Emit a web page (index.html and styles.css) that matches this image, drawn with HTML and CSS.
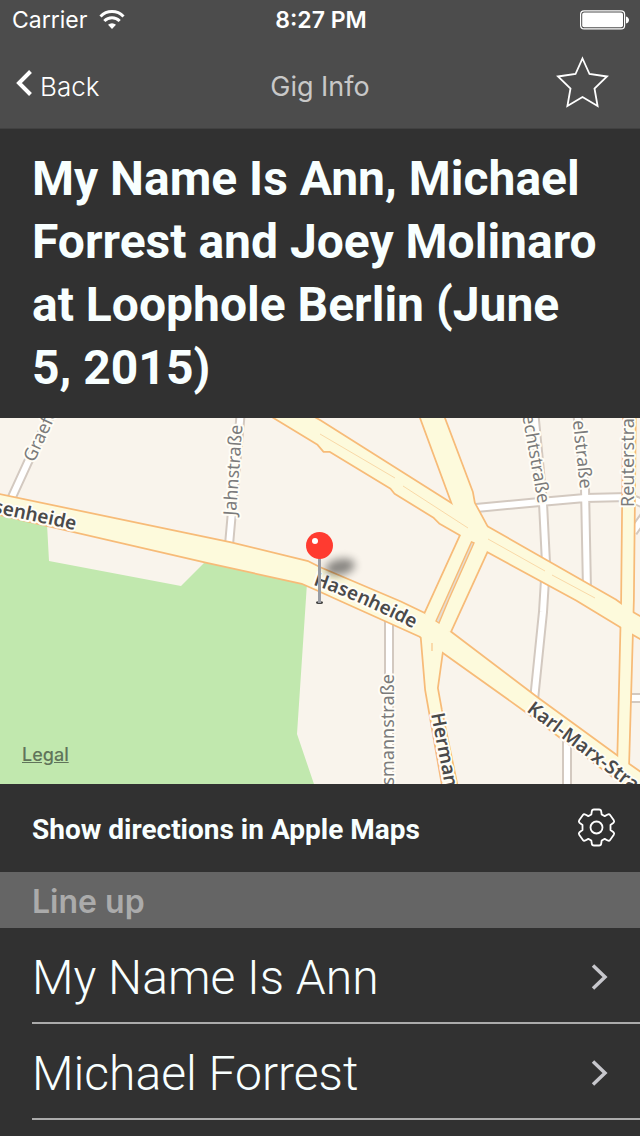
FILE: index.html
```html
<!DOCTYPE html>
<html lang="en">
<head>
<meta charset="utf-8">
<meta name="viewport" content="width=device-width, initial-scale=1">
<title>Gig Info</title>
<link rel="stylesheet" href="styles.css">
</head>
<body>
<header class="top">
  <div class="status">
    <div class="carrier">
      <span>Carrier</span>
      <svg class="wifi" width="26" height="20" viewBox="0 0 26 20" aria-hidden="true">
        <path d="M1.500 6.500a16 16 0 0 1 23 0" fill="none" stroke="#fff" stroke-width="3"/>
        <path d="M5.300 11a11 11 0 0 1 15.400 0" fill="none" stroke="#fff" stroke-width="3"/>
        <path d="M13 19l-4-4.300a6 6 0 0 1 8 0z" fill="#fff"/>
      </svg>
    </div>
    <time class="clock">8:27 PM</time>
    <svg class="battery" width="50" height="20" viewBox="0 0 50 20" aria-label="Battery full">
      <rect x=".6" y=".9" width="44" height="18" rx="3.500" fill="none" stroke="#fff" stroke-width="1.200"/>
      <rect x="2.200" y="2.500" width="40.800" height="14.800" rx="2" fill="#fff"/>
      <path d="M46 6.500c4 1 4 6 0 7z" fill="#fff"/>
    </svg>
  </div>
  <nav class="nav">
    <button class="back" type="button">
      <svg width="17" height="28" viewBox="0 0 17 28" aria-hidden="true"><path d="M15.500 2.500L4 14l11.500 11.500" fill="none" stroke="#fff" stroke-width="4"/></svg>
      <span>Back</span>
    </button>
    <h1 class="nav-title">Gig Info</h1>
    <button class="star" type="button" aria-label="Favourite">
      <svg width="54" height="54" viewBox="0 0 54 54" aria-hidden="true"><path d="M27.500 3.500l7 15.500 17.500 2.500-12.500 12 3.100 17.500-15.100-9-15.100 9 3.100-17.500-12.500-12 17.500-2.500z" fill="none" stroke="#fff" stroke-width="1.800"/></svg>
    </button>
  </nav>
</header>

<main>
  <h2 class="gig-title">My Name Is Ann, Michael Forrest and Joey Molinaro at Loophole Berlin (June 5, 2015)</h2>

  <section class="map" aria-label="Map">
    <svg class="map-art" viewBox="0 418 640 366" preserveAspectRatio="xMidYMid slice">
      <defs>
        <filter id="soft" x="-50%" y="-80%" width="200%" height="260%"><feGaussianBlur stdDeviation="4.500"/></filter>
        <g id="minor" fill="none">
          <path d="M12 497L28 462 53 410M229 545L241 410M476 508L540 502 585 498 628 497 642 503M534 410L543 503 546 563 543 612 534 700M577 410L585 488 587 590M389 615V790M567 740V790M630 698H645M633 532L645 515"/>
        </g>
        <g id="major">
          <path d="M-5 494L230 543 308 562 320 568 400 602 425 614 450 632 537 698 618 757 645 776V800L622 783 527 712 443 652 420 636 340 600 318 590 302 583 207 562-5 513z"/>
          <path d="M300 410L320 421 453 505 487 527 615 600 633 613 645 620V641L633 634 577 600 487 551 461 535 440 523 434 517 395 493 391 488 330 451 324 451 318 444 262 410z"/>
          <path d="M418 410L453 505 461 535 487 527 474 503 472 492 441 410z"/>
          <path d="M461 535L425 614 432 625 450 632 487 551 480 530z"/>
          <path d="M421 630L426 690 444 792H458L441 710 437 688 443 645z"/>
          <path d="M624 410L622 600 618 765 628 772 633 600 635 410z"/>
        </g>
      </defs>
      <rect y="400" width="640" height="400" fill="#f9f4ec"/>
      <path d="M-5 510L47 524 49 561 181 586 207 560 307 583 297 734 316 790H-5z" fill="#c1e8ae"/>
      <use href="#minor" stroke="#d3c9c0" stroke-width="10"/>
      <use href="#minor" stroke="#fff" stroke-width="6"/>
      <use href="#major" fill="#f7bb78" stroke="#f7bb78" stroke-width="3.500" stroke-linejoin="round"/>
      <use href="#major" fill="#fdfadc"/>
      <path d="M320 434L395 478M403 486L468 528M488 539L545 571M552 575L595 598" fill="none" stroke="#f9d9a8"/>
      <path d="M471.500 542l2.500 1-25 56-10 24-3-2 10-22z" fill="#e5dcd2" stroke="#f7bb78" stroke-width="1.400"/>
      <path d="M432 643v8" stroke="#f7bb78"/>
      <path id="curve" d="M313 585Q356 599 420 632" fill="none"/>
      <g class="street">
        <text transform="translate(34 463) rotate(-65)">Graefe</text>
        <text transform="translate(236 516) rotate(-86)">Jahnstraße</text>
        <text transform="translate(538 504) rotate(80)" text-anchor="end">echtstraße</text>
        <text transform="translate(580 489) rotate(84)" text-anchor="end">elstraße</text>
        <text transform="translate(634 507) rotate(-90)">Reuterstra</text>
        <text transform="translate(394 674) rotate(-90)" text-anchor="end">smannstraße</text>
      </g>
      <g class="avenue">
        <text transform="translate(75 530) rotate(12)" text-anchor="end">senheide</text>
        <text><textPath href="#curve">Hasenheide</textPath></text>
        <text transform="translate(526 711) rotate(37)">Karl-Marx-Stra</text>
        <text transform="translate(431 714) rotate(79)">Herman</text>
      </g>
      <ellipse cx="340" cy="567" rx="15" ry="8" fill="#000" opacity=".45" filter="url(#soft)" transform="rotate(-12 340 567)"/>
      <ellipse cx="319.500" cy="602.500" rx="3.500" ry="1.500" fill="#444"/>
      <rect x="318" y="556" width="3" height="47" fill="#9a9ca3"/>
      <circle cx="319.500" cy="545.500" r="13.500" fill="#ff3b30"/>
      <circle cx="315" cy="541" r="3" fill="#fff"/>
    </svg>
    <a class="legal" href="#">Legal</a>
  </section>

  <div class="directions">
    <button class="directions-link" type="button">Show directions in Apple Maps</button>
    <button class="gear" type="button" aria-label="Map settings">
      <svg width="40" height="40" viewBox="0 0 40 40" fill="none" stroke="#fff" stroke-width="1.800" stroke-linejoin="round" aria-hidden="true">
        <circle cx="20.500" cy="19.500" r="6"/>
        <path d="M18 1.500h5q2 0 2.200 1.800l.5 3.200 3 1.600 3-1.600q1.500-.7 2.400.6l3.700 5.200q.9 1.500-.3 2.500L34.500 17v5l3 2.200q1.200 1 .3 2.500l-3.700 5.200q-.9 1.300-2.400.6l-3-1.600-3 1.600-.5 3.200Q25 37.500 23 37.500h-5q-2 0-2.200-1.800l-.5-3.200-3-1.600-3 1.600q-1.500.7-2.400-.6l-3.700-5.200q-.9-1.500.3-2.500L6.500 22v-5l-3-2.200q-1.200-1-.3-2.500l3.700-5.200q.9-1.300 2.400-.6l3 1.600 3-1.600.5-3.200Q16 1.500 18 1.500z"/>
      </svg>
    </button>
  </div>

  <h3 class="section">Line up</h3>
  <ul class="acts">
    <li><a class="act" href="#"><span>My Name Is Ann</span>
      <svg width="18" height="28" viewBox="0 0 18 28" aria-hidden="true"><path d="M3 2.500L15 14 3 25.500" fill="none" stroke="#c7c7cc" stroke-width="3.500"/></svg></a></li>
    <li><a class="act" href="#"><span>Michael Forrest</span>
      <svg width="18" height="28" viewBox="0 0 18 28" aria-hidden="true"><path d="M3 2.500L15 14 3 25.500" fill="none" stroke="#c7c7cc" stroke-width="3.500"/></svg></a></li>
  </ul>
</main>
</body>
</html>
```
FILE: styles.css
```css
* { box-sizing: border-box; }

body {
  margin: 0;
  background: #313131;
  color: #f8ffff;
  font-family: Roboto, sans-serif;
}

button {
  padding: 0;
  border: 0;
  background: none;
  color: inherit;
  font: inherit;
  cursor: pointer;
}

svg { display: block; }

.top {
  background: #4c4c4c;
  border-bottom: 1px solid #414141;
  color: #fff;
  font-family: Inter, sans-serif;
}

.status {
  display: grid;
  grid-template-columns: 1fr auto 1fr;
  align-items: center;
  height: 40px;
  padding: 0 10px 0 12px;
  font-size: 23px;
}

.carrier {
  display: flex;
  align-items: center;
  gap: 12px;
}

.clock { font-weight: 600; }

.battery { justify-self: end; }

.nav {
  display: grid;
  grid-template-columns: 1fr auto 1fr;
  align-items: center;
  height: 88px;
  padding: 0 31px 4px;
}

.back {
  display: flex;
  align-items: center;
  justify-self: start;
  gap: 8px;
  margin-left: -16px;
  padding-top: 8px;
  font-size: 26px;
  font-weight: 300;
}

.back svg { margin-bottom: 6px; }

.nav-title {
  margin: 0;
  padding-top: 8px;
  color: #c8c8c8;
  font-size: 27px;
  font-weight: 400;
}

.star { justify-self: end; }

.gig-title {
  margin: 0;
  padding: 18px 32px 19px;
  font-size: 48px;
  font-weight: 700;
  line-height: 63px;
}

.map {
  position: relative;
  height: 366px;
  overflow: hidden;
}

.map-art {
  width: 100%;
  height: 100%;
}

.street,
.avenue {
  font-family: "Noto Sans", sans-serif;
  paint-order: stroke;
  stroke: #fffdf6;
  stroke-linejoin: round;
  stroke-width: 4px;
}

.street {
  fill: #7b7b7b;
  font-size: 18px;
}

.avenue {
  fill: #4a4a4a;
  font-size: 19px;
  font-weight: 600;
}

.legal {
  position: absolute;
  bottom: 18px;
  left: 22px;
  color: #60745a;
  font: 500 18px/22px Inter, sans-serif;
}

.directions {
  display: flex;
  align-items: center;
  justify-content: space-between;
  height: 88px;
  padding: 0 24px 0 32px;
}

.directions-link {
  padding-top: 2px;
  font-size: 28px;
  font-weight: 700;
}

.section {
  margin: 0;
  padding: 4px 32px 0;
  background: #656565;
  color: #ababab;
  font: 600 32px/52px Inter, sans-serif;
}

.acts {
  margin: 0;
  padding: 0 0 0 32px;
  list-style: none;
}

.act {
  display: flex;
  align-items: center;
  justify-content: space-between;
  height: 96px;
  padding: 4px 32px 0 0;
  border-bottom: 2px solid #ababab;
  color: inherit;
  font-size: 48px;
  font-weight: 300;
  text-decoration: none;
}
```
